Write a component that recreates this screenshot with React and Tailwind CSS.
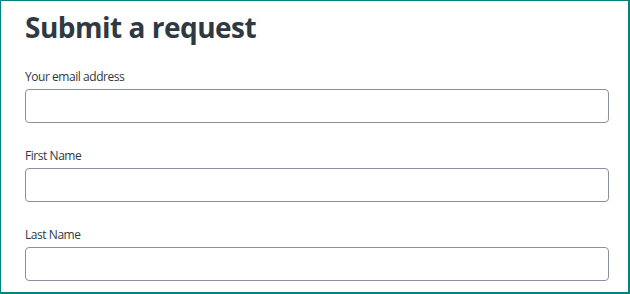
import React from 'react';

const fields = ['Your email address', 'First Name', 'Last Name'];

function Field({ label }) {
  return (
    <div className="flex flex-col">
      <label className="text-[12px] leading-[15px] tracking-[-0.45px] text-[#2f3941] mb-[5px]">{label}</label>
      <input
        type="text"
        className="h-[34px] w-full rounded-[4px] border border-[#87929d] bg-white outline-none"
      />
    </div>
  );
}

export default function App() {
  return (
    <div
      className="w-[630px] h-[294px] overflow-hidden bg-white border-l border-t border-r-2 border-b-2 border-[#03827e] pl-[24px] pr-[19px]"
      style={{ fontFamily: '"Open Sans", "Noto Sans", sans-serif' }}
    >
      <h1 className="text-[28px] leading-[40px] tracking-[-0.5px] font-bold text-[#2f3941] mt-[6px] mb-[22px]">
        Submit a request
      </h1>
      <div className="flex flex-col gap-[25px]">
        {fields.map((f) => (
          <Field key={f} label={f} />
        ))}
      </div>
    </div>
  );
}
